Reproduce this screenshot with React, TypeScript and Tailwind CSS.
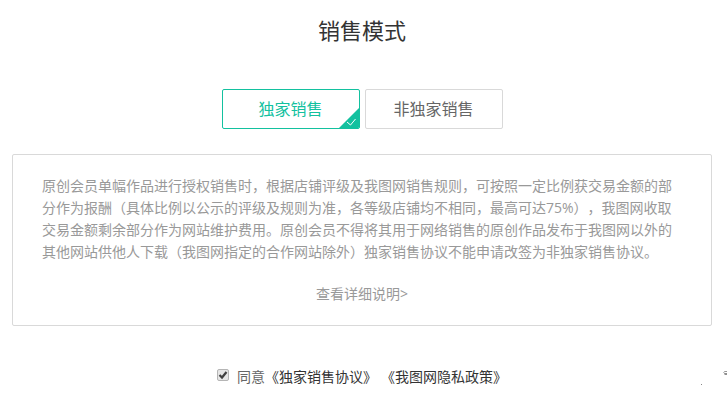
import { useState } from 'react';

const modes = ['独家销售', '非独家销售'];

export default function App() {
  const [mode, setMode] = useState(0);
  const [agreed, setAgreed] = useState(true);

  return (
    <main className="relative min-h-screen overflow-hidden bg-white pt-[15px] pr-[15px] pb-3 pl-3 font-['Open_Sans','Noto_Sans_CJK_SC',sans-serif] text-sm leading-[22px] text-[#999] [text-spacing-trim:space-all]">
      <h1 className="text-center text-[22px] leading-[30px] text-[#333]">销售模式</h1>

      <div className="mt-11 flex justify-center gap-[5px]">
        {modes.map((name, i) => (
          <button
            key={name}
            type="button"
            aria-pressed={mode === i}
            onClick={() => setMode(i)}
            className={
              mode === i
                ? 'relative h-10 w-[138px] overflow-hidden rounded-[2px] border border-[#13c19f] text-base text-[#13c19f]'
                : 'relative h-10 w-[138px] overflow-hidden rounded-[2px] border border-[#d9d9d9] text-base text-[#666]'
            }
          >
            {name}
            {mode === i && (
              <svg className="absolute right-0 bottom-0 h-5 w-5" viewBox="0 0 20 20" aria-hidden="true">
                <path d="M20 0V20H0Z" fill="#13c19f" />
                <path d="M8 14L11.500 17L16.500 11" fill="none" stroke="#fff" strokeWidth="1" />
              </svg>
            )}
          </button>
        ))}
      </div>

      <section className="mt-[25px] rounded-[2px] border border-[#d9d9d9] px-[29px] py-5">
        <p>
          原创会员单幅作品进行授权销售时，根据店铺评级及我图网销售规则，可按照一定比例获交易金额的部分作为报酬（具体比例以公示的评级及规则为准，各等级店铺均不相同，最高可达75%），我图网收取交易金额剩余部分作为网站维护费用。原创会员不得将其用于网络销售的原创作品发布于我图网以外的其他网站供他人下载（我图网指定的合作网站除外）独家销售协议不能申请改签为非独家销售协议。
        </p>
        <div className="mt-5 text-center">
          <a href="#details">查看详细说明&gt;</a>
        </div>
      </section>

      <div className="mt-10 flex items-center justify-center text-[#333]">
        <span className="relative mb-1 block h-3 w-3">
          <input
            id="agree"
            type="checkbox"
            checked={agreed}
            onChange={(e) => setAgreed(e.target.checked)}
            className="block h-3 w-3 appearance-none rounded-[2px] border border-[#b5b5b5] bg-[#e6e6e6]"
          />
          {agreed && (
            <svg className="pointer-events-none absolute inset-0 h-3 w-3" viewBox="0 0 12 12" aria-hidden="true">
              <path d="M2.500 6L5 8.500L9.500 3" fill="none" stroke="#404040" strokeWidth="2.2" />
            </svg>
          )}
        </span>
        <label htmlFor="agree" className="pl-2 text-[#666]">同意</label>
        <a href="#exclusive">《独家销售协议》</a>
        <a href="#privacy" className="ml-1">《我图网隐私政策》</a>
      </div>

      <svg className="absolute right-0 bottom-3 h-5 w-7" viewBox="0 0 28 20" aria-hidden="true">
        <rect x="2" y="16" width="1" height="1" fill="#888" />
        <path d="M28 3.500H25.500Q24 4.500 25.500 5.500" fill="none" stroke="#999" />
        <path d="M25.500 6H28" stroke="#222" strokeWidth="1" />
      </svg>
    </main>
  );
}
